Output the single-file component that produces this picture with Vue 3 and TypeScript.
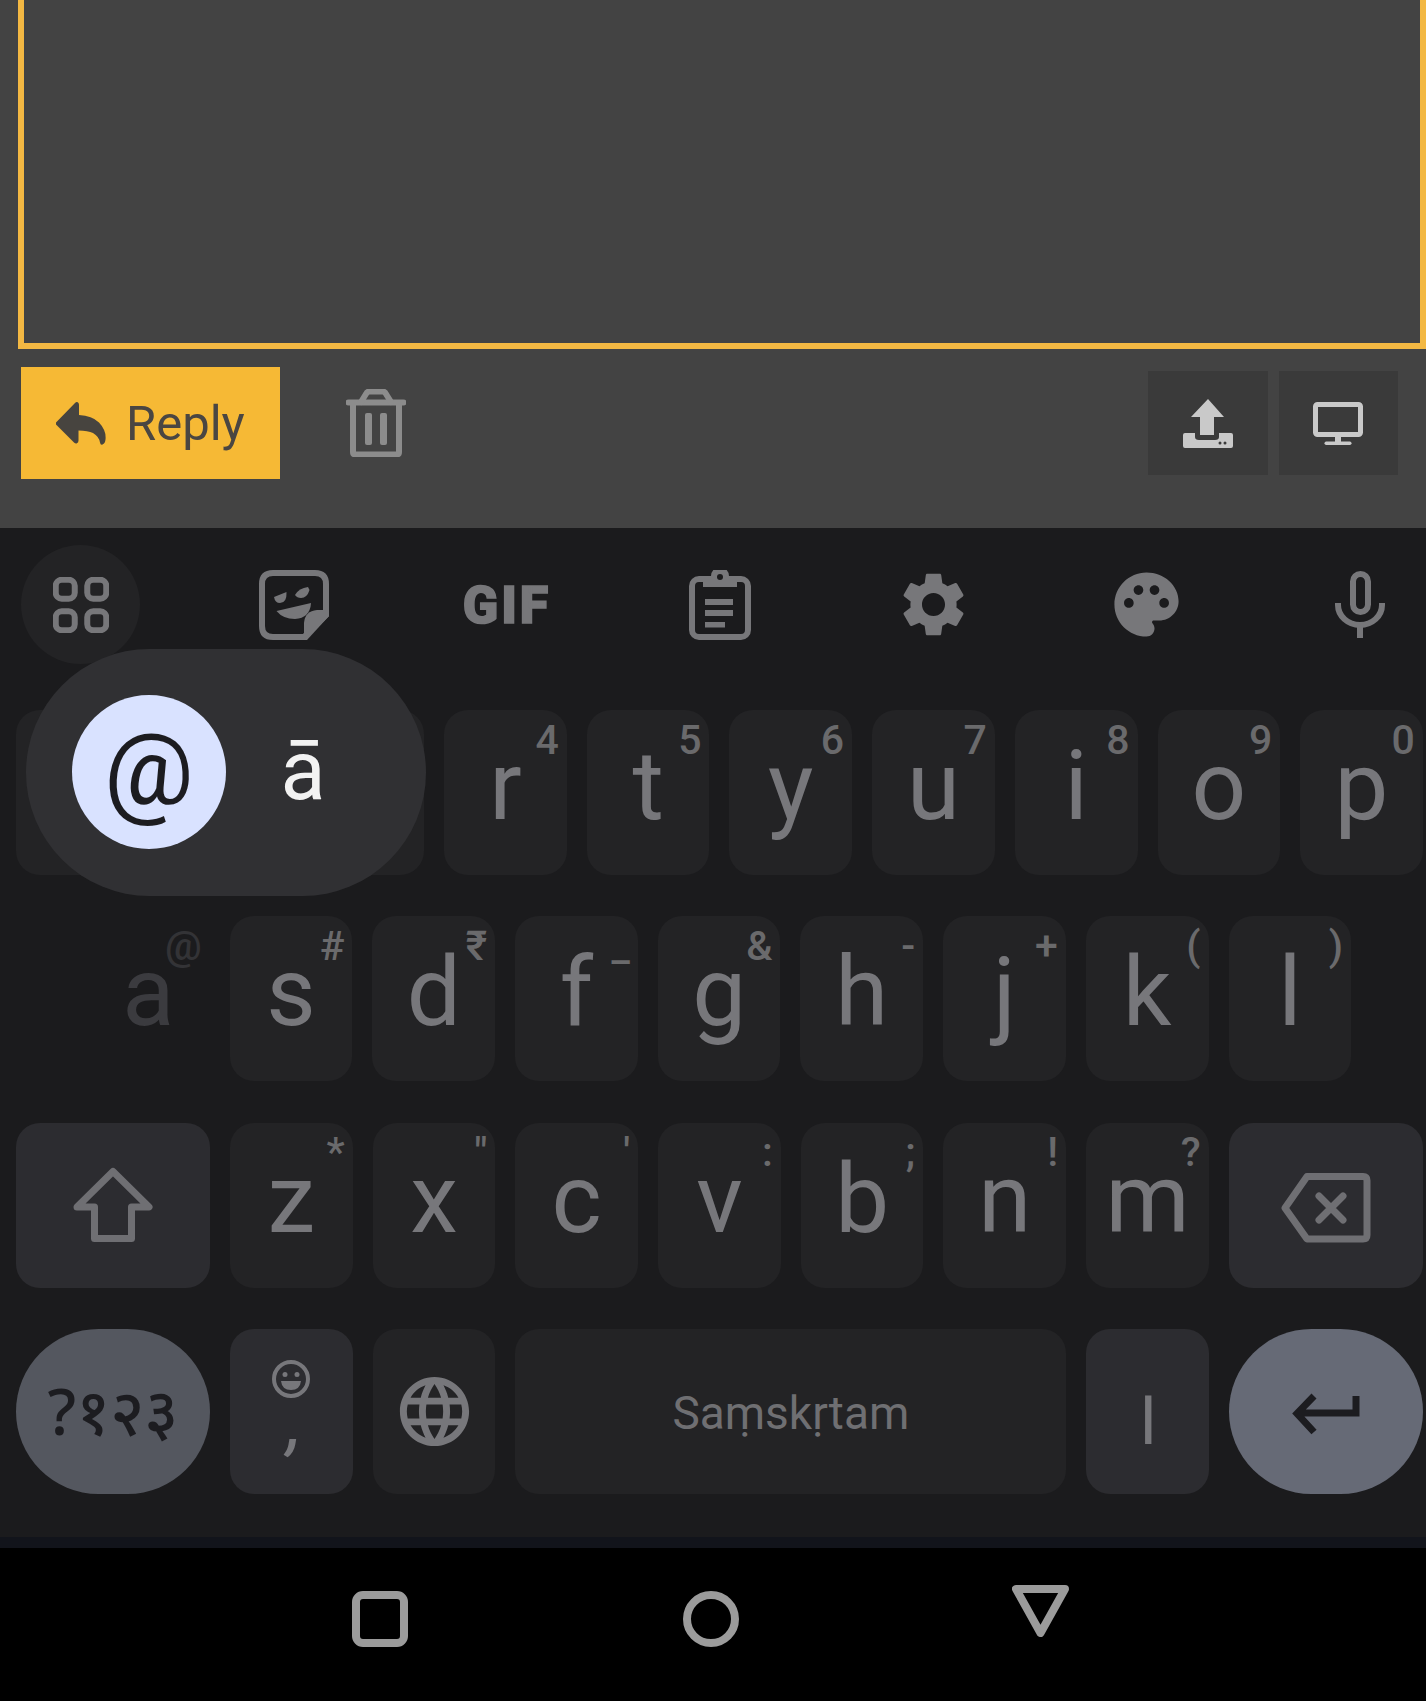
<template>
  <div class="screen">
    <!-- compose area -->
    <section class="compose">
      <div class="editor"></div>
      <div class="actions">
        <button class="reply-btn">
          <svg class="reply-icon" viewBox="0 0 50 43">
            <path d="M0 20.500 19 1q2-2 3.500 0 .5.8.5 2V13q13 .5 20 7.500 7.500 8 6.500 17-.3 4-3 5-2 .8-2.500-2-1-6-7-9.500-5-2.500-14.500-2.500v10q0 2-1.500 2.800-1.500.7-3-.8L0 22.500q-1-1 0-2z" />
          </svg>
          <span>Reply</span>
        </button>
        <svg class="trash-icon" viewBox="0 0 60 68">
          <path class="trash-line" d="M2.500 13.500h55M7 14v49q0 2.500 2.500 2.500h41q2.500 0 2.500-2.500V14" />
          <path class="trash-line" d="M15 13l5-8q1-2.500 3.500-2.500h13q2.500 0 3.500 2.500l5 8" />
          <rect x="19" y="24" width="7" height="32" rx="2" />
          <rect x="34" y="24" width="7" height="32" rx="2" />
        </svg>
        <div class="tool-btns">
          <div class="tool-btn">
            <svg class="upload-icon" viewBox="0 0 50 49">
              <path d="M25 0 41 18H31V36H17V18H8Z" />
              <path d="M2 34H12V38Q12 41 16 41H32Q36 41 36 38V34H48Q50 34 50 36V47Q50 49 48 49H2Q0 49 0 47V36Q0 34 2 34Z" />
              <circle cx="37" cy="44" r="1.500" fill="#3a3a3a" />
              <circle cx="42" cy="44" r="1.500" fill="#3a3a3a" />
            </svg>
          </div>
          <div class="tool-btn">
            <svg class="monitor-icon" viewBox="0 0 50 43">
              <rect x="2.500" y="2.500" width="45" height="30" rx="2" class="monitor-frame" />
              <rect x="22" y="34" width="6" height="7" />
              <rect x="11.500" y="39.500" width="27" height="3.500" rx="1.700" />
            </svg>
          </div>
        </div>
      </div>
    </section>

    <!-- keyboard -->
    <section class="keyboard">
      <div class="toolbar">
        <div class="tb-item tb-item--active">
          <svg class="ic-apps" viewBox="0 0 56 56">
            <rect v-for="pos in appCells" :key="pos[0] + '-' + pos[1]" :x="pos[0]" :y="pos[1]" width="19" height="19" rx="6" />
          </svg>
        </div>
        <div class="tb-item">
          <svg class="ic-sticker" viewBox="0 0 70 70">
            <path class="sticker-frame" d="M14 3H56Q67 3 67 14V45L45 67H14Q3 67 3 56V14Q3 3 14 3Z" />
            <path d="M70 40H58Q46 41 45 53V70H48L70 46Z" />
            <path d="M15 27 27.500 22Q28 33 21 33 16 33 15 27Z" />
            <path d="M36 25Q40 18 49 17L50.500 20Q48 28 42 28 38 28 36 25Z" />
            <path d="M17.500 41 52 33Q51 48 36 49 24 49 17.500 41Z" />
          </svg>
        </div>
        <div class="tb-item"><span class="gif">GIF</span></div>
        <div class="tb-item">
          <svg class="ic-clipboard" viewBox="0 0 62 70">
            <rect class="clip-frame" x="3" y="9" width="56" height="58" rx="7" />
            <path d="M14 6H22A9 9 0 0 1 40 6H48V17H14Z" />
            <circle cx="31" cy="7" r="3" fill="#1b1b1d" />
            <rect x="16" y="29" width="28" height="6" />
            <rect x="16" y="40" width="28" height="6" />
            <rect x="16" y="52" width="20" height="5.500" />
          </svg>
        </div>
        <div class="tb-item">
          <svg class="ic-material" viewBox="0 0 24 24">
            <path d="M19.140 12.940c.04-.3.06-.61.06-.94 0-.32-.02-.64-.07-.94l2.030-1.580c.18-.14.23-.41.12-.61l-1.920-3.320c-.12-.22-.37-.29-.59-.22l-2.390.96c-.5-.38-1.030-.7-1.620-.94l-.36-2.540c-.04-.24-.24-.41-.48-.41h-3.840c-.24 0-.43.17-.47.41l-.36 2.540c-.59.24-1.130.57-1.620.94l-2.390-.96c-.22-.08-.47 0-.59.22L2.740 8.870c-.12.21-.08.47.12.61l2.030 1.580c-.05.3-.09.63-.09.94s.02.64.07.94l-2.030 1.580c-.18.14-.23.41-.12.61l1.920 3.320c.12.22.37.29.59.22l2.390-.96c.5.38 1.030.7 1.620.94l.36 2.540c.05.24.24.41.48.41h3.840c.24 0 .44-.17.47-.41l.36-2.540c.59-.24 1.130-.56 1.620-.94l2.390.96c.22.08.47 0 .59-.22l1.920-3.320c.12-.22.07-.47-.12-.61l-2.010-1.580zM12 15.600c-1.980 0-3.600-1.620-3.600-3.600s1.620-3.600 3.600-3.600 3.600 1.620 3.600 3.600-1.620 3.600-3.600 3.600z" />
          </svg>
        </div>
        <div class="tb-item">
          <svg class="ic-material" viewBox="0 0 24 24">
            <path d="M12 2C6.490 2 2 6.490 2 12s4.490 10 10 10c1.380 0 2.500-1.120 2.500-2.500 0-.61-.23-1.200-.64-1.670-.08-.1-.13-.21-.13-.33 0-.28.22-.5.5-.5H16c3.310 0 6-2.690 6-6 0-4.960-4.490-9-10-9zm5.500 11c-.83 0-1.500-.67-1.500-1.500s.67-1.500 1.500-1.500 1.500.67 1.500 1.500-.67 1.500-1.500 1.500zm-3-4c-.83 0-1.500-.67-1.500-1.500S13.670 6 14.500 6s1.500.67 1.500 1.500S15.330 9 14.500 9zM5 11.500c0-.83.67-1.500 1.500-1.500s1.500.67 1.500 1.500S7.330 13 6.500 13 5 12.330 5 11.500zm6-4c0 .83-.67 1.500-1.500 1.500S8 8.330 8 7.500 8.670 6 9.500 6s1.500.67 1.500 1.500z" />
          </svg>
        </div>
        <div class="tb-item">
          <svg class="ic-mic" viewBox="0 0 50 67">
            <rect x="18" y="3" width="15" height="38" rx="7.500" />
            <path d="M3 32V34A22 20 0 0 0 47 34V32M25 54V67" />
          </svg>
        </div>
      </div>

      <div class="keys">
        <div class="row">
          <div v-for="k in rowOne" :key="k.label" class="key">
            <span class="letter">{{ k.label }}</span>
            <span class="hint">{{ k.hint }}</span>
          </div>
        </div>

        <div class="row row--inset">
          <div v-for="k in rowTwo" :key="k.label" class="key" :class="{ 'key--pressed': k.label === 'a' }">
            <span class="letter">{{ k.label }}</span>
            <span class="hint">{{ k.hint }}</span>
          </div>
        </div>

        <div class="row">
          <div class="key key--wide key--mod">
            <svg class="ic-shift" viewBox="0 0 80 76">
              <path d="M40 4.500 76 40H58.500V71.500H21.500V40H4Z" />
            </svg>
          </div>
          <div v-for="k in rowThree" :key="k.label" class="key">
            <span class="letter">{{ k.label }}</span>
            <span class="hint">{{ k.hint }}</span>
          </div>
          <div class="key key--wide key--mod">
            <svg class="ic-del" viewBox="0 0 90 70">
              <path d="M4 35 26 3.500H82Q86 3.500 86 7.500V62Q86 66 82 66H26Z" />
              <path d="M38 23 62 47M62 23 38 47" />
            </svg>
          </div>
        </div>

        <div class="row">
          <div class="key key--wide key--pill key--symbols"><span class="symbols-label">?१२३</span></div>
          <div class="key key--mod key--comma">
            <svg class="ic-smile" viewBox="0 0 38 38">
              <circle class="smile-ring" cx="19" cy="19" r="17" />
              <circle cx="13" cy="14.500" r="2.500" />
              <circle cx="25" cy="14.500" r="2.500" />
              <path d="M9 21H29Q28 30 19 30 10 30 9 21Z" />
            </svg>
            <span class="comma">,</span>
          </div>
          <div class="key key--mod-soft key--center">
            <svg class="ic-globe" viewBox="0 0 24 24">
              <path d="M11.990 2C6.470 2 2 6.480 2 12s4.470 10 9.990 10C17.520 22 22 17.520 22 12S17.520 2 11.990 2zm6.930 6h-2.950c-.32-1.250-.78-2.450-1.380-3.560 1.840.63 3.370 1.910 4.330 3.560zM12 4.040c.83 1.200 1.480 2.530 1.910 3.960h-3.820c.43-1.430 1.080-2.760 1.910-3.960zM4.260 14C4.100 13.360 4 12.690 4 12s.1-1.360.26-2h3.380c-.08.66-.14 1.320-.14 2 0 .68.06 1.340.14 2H4.260zm.82 2h2.950c.32 1.250.78 2.450 1.380 3.560-1.840-.63-3.370-1.900-4.330-3.560zm2.950-8H5.080c.96-1.660 2.490-2.930 4.330-3.560C8.810 5.550 8.350 6.750 8.030 8zM12 19.960c-.83-1.200-1.480-2.530-1.910-3.960h3.820c-.43 1.430-1.080 2.760-1.910 3.960zM14.340 14H9.660c-.09-.66-.16-1.320-.16-2 0-.68.07-1.350.16-2h4.680c.09.65.16 1.320.16 2 0 .68-.07 1.340-.16 2zm.25 5.560c.6-1.110 1.060-2.310 1.380-3.560h2.950c-.96 1.650-2.490 2.930-4.330 3.560zM16.360 14c.08-.66.14-1.320.14-2 0-.68-.06-1.340-.14-2h3.380c.16.64.26 1.310.26 2s-.1 1.360-.26 2h-3.380z" />
            </svg>
          </div>
          <div class="key key--space"><span>Saṃskṛtam</span></div>
          <div class="key key--mod key--center"><span class="danda">।</span></div>
          <div class="key key--wide key--pill key--enter">
            <svg class="ic-enter" viewBox="0 0 68 42">
              <path d="M64 3V20H6M22 3 5 20.500 22 39" />
            </svg>
          </div>
        </div>
      </div>

      <!-- long press popup over the a key -->
      <div class="popup">
        <div class="popup-item popup-item--on"><span class="popup-at">@</span></div>
        <div class="popup-item"><span class="popup-alt">ā</span></div>
      </div>
    </section>

    <div class="strip"></div>

    <nav class="navbar">
      <svg class="nav-icon" viewBox="0 0 56 56"><rect x="4" y="4" width="48" height="48" rx="7" /></svg>
      <svg class="nav-icon" viewBox="0 0 56 56"><circle cx="28" cy="28" r="24" /></svg>
      <svg class="nav-icon nav-icon--back" viewBox="0 0 57 52"><path d="M4 4H53L28.500 48Z" /></svg>
    </nav>
  </div>
</template>

<script setup lang="ts">
interface KeyDef {
  label: string;
  hint: string;
}

const appCells: number[][] = [
  [2.75, 2.75],
  [34.25, 2.75],
  [2.75, 34.25],
  [34.25, 34.25]
];

// q w e are covered by the popup, so they stay blank
const rowOne: KeyDef[] = [
  { label: '', hint: '' },
  { label: ' ', hint: '' },
  { label: '  ', hint: '' },
  { label: 'r', hint: '4' },
  { label: 't', hint: '5' },
  { label: 'y', hint: '6' },
  { label: 'u', hint: '7' },
  { label: 'i', hint: '8' },
  { label: 'o', hint: '9' },
  { label: 'p', hint: '0' }
];

const rowTwo: KeyDef[] = [
  { label: 'a', hint: '@' },
  { label: 's', hint: '#' },
  { label: 'd', hint: '₹' },
  { label: 'f', hint: '_' },
  { label: 'g', hint: '&' },
  { label: 'h', hint: '-' },
  { label: 'j', hint: '+' },
  { label: 'k', hint: '(' },
  { label: 'l', hint: ')' }
];

const rowThree: KeyDef[] = [
  { label: 'z', hint: '*' },
  { label: 'x', hint: '"' },
  { label: 'c', hint: "'" },
  { label: 'v', hint: ':' },
  { label: 'b', hint: ';' },
  { label: 'n', hint: '!' },
  { label: 'm', hint: '?' }
];
</script>

<style>
html,
body {
  margin: 0;
  background: #000;
}
</style>

<style scoped>
.screen {
  width: 1426px;
  height: 1701px;
  overflow: hidden;
  font-family: Roboto, "Noto Sans", sans-serif;
}

/* Compose */
.compose {
  height: 528px;
  background: #434343;
  box-sizing: border-box;
}

.editor {
  height: 349px;
  margin-left: 18px;
  width: 1408px;
  box-sizing: border-box;
  border: 6px solid #f3b843;
  border-top: none;
}

.actions {
  display: flex;
  align-items: flex-start;
  padding: 18px 28px 0 21px;
}

.reply-btn {
  display: flex;
  align-items: center;
  width: 259px;
  height: 112px;
  padding: 0 0 0 35px;
  border: none;
  background: #f6b935;
  color: #4a4642;
  font-family: Roboto, sans-serif;
  font-size: 49px;
  gap: 20px;
}

.reply-icon {
  width: 50px;
  height: 43px;
  fill: #47443f;
  flex: none;
}

.trash-icon {
  width: 60px;
  height: 68px;
  margin: 22px 0 0 66px;
  fill: #8c8c8c;
}

.trash-line {
  fill: none;
  stroke: #8c8c8c;
  stroke-width: 6;
  stroke-linecap: round;
}

.tool-btns {
  display: flex;
  gap: 11px;
  margin: 4px 0 0 auto;
}

.tool-btn {
  width: 119.5px;
  height: 104px;
  background: #3a3a3a;
  display: flex;
  align-items: center;
  justify-content: center;
}

.upload-icon {
  width: 50px;
  height: 49px;
  fill: #c9c9c9;
}

.monitor-icon {
  width: 50px;
  height: 43px;
  fill: #c9c9c9;
}

.monitor-frame {
  fill: none;
  stroke: #c9c9c9;
  stroke-width: 5;
}

/* Keyboard */
.keyboard {
  position: relative;
  height: 1009px;
  background: #1b1b1d;
  box-sizing: border-box;
  padding-top: 17px;
}

.toolbar {
  display: flex;
  justify-content: space-between;
  padding: 0 6.5px 0 21px;
}

.tb-item {
  width: 119px;
  height: 119px;
  border-radius: 50%;
  display: flex;
  align-items: center;
  justify-content: center;
  color: #77777a;
  fill: #77777a;
}

.tb-item--active {
  background: #232325;
}

.ic-apps {
  width: 56px;
  height: 56px;
  fill: none;
  stroke: #77777a;
  stroke-width: 6;
}

.ic-sticker {
  width: 70px;
  height: 70px;
}

.sticker-frame {
  fill: none;
  stroke: #77777a;
  stroke-width: 6;
}

.gif {
  font-size: 52px;
  font-weight: 900;
  letter-spacing: 3px;
  line-height: 1;
  padding-top: 3px;
  -webkit-text-stroke: 1.5px #77777a;
}

.ic-clipboard {
  width: 62px;
  height: 70px;
}

.clip-frame {
  fill: none;
  stroke: #77777a;
  stroke-width: 6;
}

.ic-material {
  width: 77px;
  height: 77px;
}

.ic-mic {
  width: 50px;
  height: 67px;
  fill: none;
  stroke: #77777a;
  stroke-width: 6;
}

.keys {
  display: flex;
  flex-direction: column;
  gap: 41.3px;
  margin-top: 46px;
  padding: 0 3px 0 16px;
}

.row {
  display: flex;
  gap: 20px;
  height: 165px;
}

.row--inset {
  padding-left: 71px;
}

.key {
  position: relative;
  width: 122.7px;
  flex: none;
  box-sizing: border-box;
  border-radius: 24px;
  background: #232325;
  color: #77777b;
  display: flex;
  justify-content: center;
  align-items: flex-start;
}

.letter {
  font-size: 96px;
  line-height: 96px;
  padding-top: 28px;
}

.hint {
  position: absolute;
  top: 9.500px;
  right: 8px;
  font-size: 41px;
  font-weight: 500;
  line-height: 41px;
  color: #6a6a6c;
}

.key--pressed {
  background: transparent;
}

.key--pressed .letter {
  color: #3b3b3f;
}

.key--pressed .hint {
  color: #333336;
}

.key--wide {
  width: 194px;
}

.key--mod {
  background: #2c2c30;
}

.key--mod-soft {
  background: #232325;
}

.key--mod,
.key--center,
.key--pill {
  align-items: center;
}

.key--pill {
  border-radius: 83px;
}

.key--symbols {
  background: #54575f;
  color: #1c1c20;
}

.symbols-label {
  font-family: "Noto Sans", sans-serif;
  font-size: 64px;
  font-weight: 500;
  line-height: 1;
}

.key--enter {
  background: #666a76;
}

.key--comma {
  flex-direction: column;
  justify-content: flex-start;
}

.ic-smile {
  width: 38px;
  height: 38px;
  margin-top: 31px;
  fill: #77777b;
}

.smile-ring {
  fill: none;
  stroke: #77777b;
  stroke-width: 4;
}

.comma {
  font-size: 66px;
  line-height: 66px;
  font-style: italic;
  font-weight: 500;
  margin: -6px 0 0 6px;
}

.key--space {
  flex: 1;
  align-items: center;
  font-size: 46px;
  color: #6f6f72;
  padding-top: 3px;
}

.danda {
  font-family: Roboto, "Noto Sans", sans-serif;
  font-size: 78px;
  line-height: 1;
  padding: 14px 6px 0 0;
}

.ic-shift {
  width: 80px;
  height: 76px;
  fill: none;
  stroke: #6f6f73;
  stroke-width: 7;
  stroke-linejoin: round;
}

.ic-del {
  width: 90px;
  height: 70px;
  margin-top: 5px;
  fill: none;
  stroke: #6f6f73;
  stroke-width: 7;
  stroke-linejoin: round;
  stroke-linecap: round;
}

.ic-globe {
  width: 83px;
  height: 83px;
  fill: #77777b;
}

.ic-enter {
  width: 68px;
  height: 42px;
  margin-top: 6px;
  fill: none;
  stroke: #1c1c20;
  stroke-width: 7;
}

/* Popup */
.popup {
  position: absolute;
  left: 26px;
  top: 121px;
  width: 400px;
  height: 247px;
  box-sizing: border-box;
  padding-left: 46px;
  border-radius: 124px;
  background: #303033;
  display: flex;
  align-items: center;
}

.popup-item {
  width: 154px;
  height: 154px;
  border-radius: 50%;
  display: flex;
  align-items: center;
  justify-content: center;
  font-size: 83px;
  color: #f2f2f2;
}

.popup-item--on {
  background: #d9e2ff;
  color: #1c1c20;
  margin-top: -2px;
}

.popup-at {
  font-size: 100px;
  line-height: 1;
  margin-top: -4px;
}

.popup-alt {
  line-height: 1;
  margin-top: -4px;
}

/* Bottom */
.strip {
  height: 11px;
  background: #12141b;
}

.navbar {
  display: flex;
  align-items: flex-start;
  gap: 275px;
  padding: 43px 0 0 352px;
}

.nav-icon {
  width: 56px;
  height: 56px;
  fill: none;
  stroke: #9b9b9b;
  stroke-width: 8;
  stroke-linejoin: round;
}

.nav-icon--back {
  width: 57px;
  height: 52px;
  margin: -6px 0 0 -2px;
}
</style>
